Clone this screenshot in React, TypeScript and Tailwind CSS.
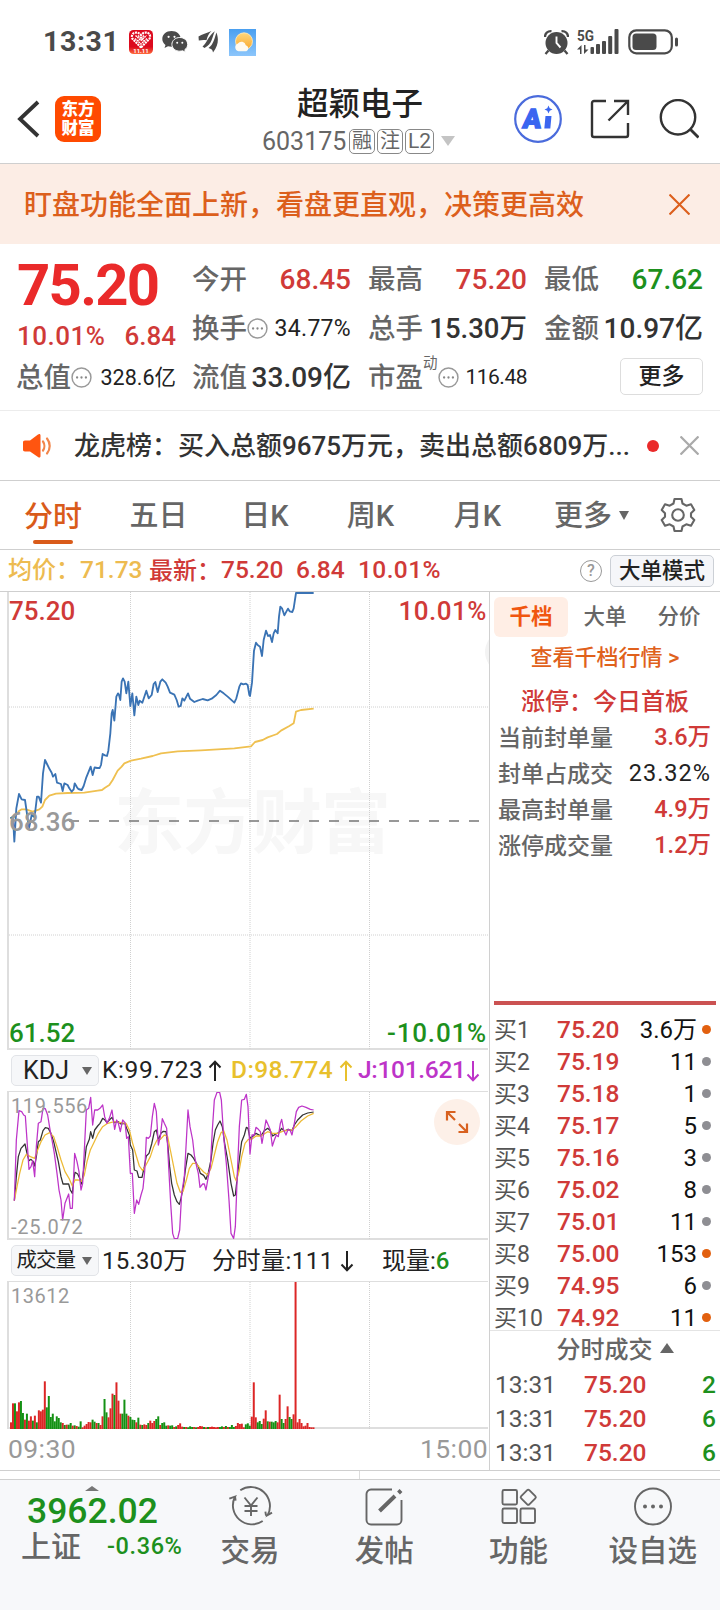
import clsx from 'clsx';
import React from 'react';

// ── Data ──────────────────────────────────────────────────────────────────────

const PRICE_LINE =
  '28,1015 36,1010 40,1085 46,985 54,942 62,958 72,960 80,1015 84,1045 92,1005 98,1010 102,1000 108,950 113,950 120,968 126,880 132,840 138,852 146,868 152,878 156,890 163,882 168,908 180,912 185,933 190,910 200,915 205,925 212,935 218,928 221,910 228,922 232,927 242,930 248,918 256,892 263,875 269,860 275,885 281,862 288,864 296,864 300,855 305,822 312,826 318,828 322,812 328,760 332,700 335,690 340,722 346,650 351,640 354,645 358,660 362,605 366,595 371,605 376,640 382,605 388,678 394,640 400,706 406,650 412,675 416,662 424,668 430,650 436,632 443,655 452,645 458,612 463,606 470,636 478,605 484,598 494,608 500,620 507,638 520,644 527,660 533,680 539,678 544,655 550,662 561,640 567,656 580,666 590,662 605,657 620,661 632,656 646,645 657,632 668,640 680,650 700,668 706,655 715,620 720,610 727,613 735,611 740,615 745,645 747,648 753,608 759,512 765,488 770,495 777,500 783,528 788,480 795,452 801,468 807,465 813,486 818,460 823,450 830,460 834,410 838,380 843,385 850,406 856,395 861,386 866,394 874,396 878,385 885,339 938,339';

const AVG_LINE =
  '28,1015 42,1010 54,993 62,988 75,988 95,995 115,988 124,980 132,960 145,947 165,941 200,939 250,938 290,932 303,930 312,923 325,915 335,900 350,872 362,860 370,850 390,842 420,836 455,828 480,820 530,814 600,811 700,805 750,799 762,786 785,780 800,772 828,762 840,752 865,738 878,730 881,715 885,695 900,690 938,686';

const J_LINE =
  '40,482 46,300 54,212 62,215 68,225 73,228 78,300 84,388 90,380 95,362 101,410 106,320 112,250 120,245 126,205 133,206 140,225 148,275 153,300 160,340 168,400 174,450 180,480 185,540 192,490 203,462 208,505 214,505 217,430 221,340 228,365 234,395 240,450 245,430 250,330 256,210 263,205 269,172 275,255 281,210 290,210 297,205 305,195 311,230 318,250 325,235 333,210 341,268 347,240 352,250 358,275 365,240 372,248 377,295 382,290 388,400 394,400 400,520 407,480 413,493 420,465 426,445 431,395 436,292 442,295 448,288 454,230 460,190 466,215 472,315 478,290 484,236 490,250 497,265 503,380 509,490 515,580 520,596 530,595 536,570 542,460 550,410 555,320 561,210 567,260 575,300 580,345 587,380 592,400 597,442 605,432 610,432 615,450 621,415 628,380 634,270 640,180 648,157 656,157 661,180 668,290 676,370 684,480 690,580 698,595 703,560 709,400 715,260 722,180 730,178 736,163 741,200 747,342 753,285 760,285 765,262 772,268 778,275 783,310 790,270 795,240 803,258 808,270 814,318 820,300 826,285 832,290 838,250 842,238 848,270 855,285 861,268 868,272 873,285 880,250 886,215 893,202 903,198 915,202 928,208 938,210';

const K_LINE =
  '40,482 46,410 52,350 60,325 72,312 78,340 84,362 90,358 97,365 101,378 106,350 112,305 118,300 126,272 133,263 142,265 150,280 158,305 165,335 172,365 180,410 186,432 203,432 208,450 214,460 218,420 222,397 230,402 236,415 242,432 248,390 256,320 265,298 269,275 275,295 281,270 290,258 297,250 305,235 312,240 318,248 325,240 333,232 340,248 352,245 360,252 372,250 378,268 385,285 388,315 395,330 400,390 408,393 413,412 423,412 430,380 436,348 444,340 452,312 460,275 466,270 472,300 480,280 487,274 495,275 500,310 506,380 512,430 520,465 528,485 535,493 540,475 547,440 553,390 561,340 570,345 578,355 585,368 592,380 598,400 608,406 615,418 622,398 630,360 636,310 643,270 650,255 657,243 664,260 671,310 680,360 690,430 698,468 703,465 709,410 716,350 722,305 730,285 736,262 741,265 747,295 754,290 765,280 780,288 790,272 800,265 808,272 815,288 824,282 834,278 842,265 850,273 862,268 873,272 880,255 890,240 905,225 920,219 938,216';

const D_LINE =
  '40,482 48,440 56,400 66,360 76,343 88,350 101,355 110,330 120,305 132,285 146,278 158,290 168,320 180,360 192,395 204,415 214,438 222,420 232,420 242,424 250,405 258,365 268,330 280,305 292,280 305,260 320,250 340,245 360,248 375,250 385,270 395,310 405,345 415,378 425,392 435,375 448,350 458,320 468,300 478,298 490,285 500,290 508,330 518,380 528,430 538,457 546,455 556,420 565,385 575,370 585,370 595,382 608,396 620,405 630,385 640,345 650,305 660,278 668,272 678,300 690,360 700,410 706,423 714,395 722,350 732,310 742,298 752,298 765,288 780,288 800,275 815,280 830,280 850,272 873,270 885,260 900,243 920,228 938,220';

// one entry per minute, height + direction (r = up, g = down)
const VOLUME =
  '20r 77r 77g 53r 80r 84g 48g 28r 46g 25r 38r 25g 40r 20g 56r 53r 58r 143r 65g 99g 36g 46g 23g 38g 33g 20g 18r 12g 13r 13g 18g 10r 11g 9r 7g 23g 5r 10r 15r 21r 20r 28g 22g 18r 18g 12r 38r 90g 50g 35r 62r 106r 102g 140r 85r 46r 46g 88g 46g 40r 36g 28g 27g 20r 34g 13r 12g 14r 12r 18g 25r 18r 24r 30g 38g 12r 18g 20g 10g 11r 10g 11g 6r 8g 12r 17r 7r 6g 6r 5g 8g 6g 6r 5g 6r 9r 8r 6g 5r 6g 6r 7r 6r 5r 6r 6g 8g 6r 9g 6r 6g 12g 6g 9r 18r 15r 16r 5r 14g 17g 10g 37r 140r 35r 20g 24g 15g 31r 56r 23g 22r 22g 20g 24g 20r 103r 30g 18g 30r 68r 36g 30g 44r 441r 20r 30r 18r 8r 10r 18r 6r 5r 5r'
    .split(' ')
    .map((v) => ({ h: parseInt(v, 10), up: v.endsWith('r') }));

const BIDS = [
  { level: '买1', price: '75.20', qty: '3.6万', hot: true },
  { level: '买2', price: '75.19', qty: '11', hot: false },
  { level: '买3', price: '75.18', qty: '1', hot: false },
  { level: '买4', price: '75.17', qty: '5', hot: false },
  { level: '买5', price: '75.16', qty: '3', hot: false },
  { level: '买6', price: '75.02', qty: '8', hot: false },
  { level: '买7', price: '75.01', qty: '11', hot: false },
  { level: '买8', price: '75.00', qty: '153', hot: true },
  { level: '买9', price: '74.95', qty: '6', hot: false },
  { level: '买10', price: '74.92', qty: '11', hot: true },
];

const TICKS = [
  { time: '13:31', price: '75.20', vol: '2' },
  { time: '13:31', price: '75.20', vol: '6' },
  { time: '13:31', price: '75.20', vol: '6' },
];

const LIMIT_STATS = [
  { label: '当前封单量', value: '3.6万', red: true },
  { label: '封单占成交', value: '23.32%', red: false },
  { label: '最高封单量', value: '4.9万', red: true },
  { label: '涨停成交量', value: '1.2万', red: true },
];

// ── Small pieces ──────────────────────────────────────────────────────────────

const MoreDot = () => (
  <svg width="21" height="21" viewBox="0 0 20 20" className="shrink-0">
    <circle cx="10" cy="10" r="9" fill="none" stroke="#999" strokeWidth="1.4" />
    <circle cx="5.8" cy="10" r="1.1" fill="#888" />
    <circle cx="10" cy="10" r="1.1" fill="#888" />
    <circle cx="14.2" cy="10" r="1.1" fill="#888" />
  </svg>
);

const Arrow = ({ down }: { down?: boolean }) => (
  <svg width="14" height="22" viewBox="0 0 14 22" className={clsx('shrink-0', down && 'rotate-180')}>
    <path d="M7 21V2M1.5 7.5 7 1.8l5.5 5.7" fill="none" stroke="currentColor" strokeWidth="2" />
  </svg>
);

const Caret = ({ up, className }: { up?: boolean; className?: string }) => (
  <svg width="14" height="10" viewBox="0 0 14 10" className={clsx('shrink-0', className)}>
    <path d={up ? 'M0 10h14L7 0z' : 'M0 0h14L7 10z'} fill="currentColor" />
  </svg>
);

const Cross = ({ size, width }: { size: number; width: number }) => (
  <svg width={size} height={size} viewBox="0 0 20 20">
    <path d="M.5.5l19 19M19.5.5l-19 19" stroke="currentColor" strokeWidth={width} />
  </svg>
);

const GridLines = ({ top, bottom }: { top: number; bottom: number }) => (
  <g stroke="#d0d0d0" strokeWidth="3" strokeDasharray="3 3">
    <path d={`M388.5 ${top}V${bottom}`} />
    <path d={`M747 ${top}V${bottom}`} />
    <path d={`M1105.5 ${top}V${bottom}`} />
  </g>
);

// ── Status bar ────────────────────────────────────────────────────────────────

const StatusBar = () => (
  <div className="flex h-[76px] items-center pt-[8px] pl-[43px] text-[#4a4a4a]">
    <span className="w-[86px] text-[28.5px] leading-none font-bold tracking-[0.6px]">13:31</span>
    <svg width="24" height="24" viewBox="0 0 24 24" className="overflow-visible">
      <defs>
        <linearGradient id="mall" x1="0" y1="0" x2="0" y2="1">
          <stop offset=".7" stopColor="#dc0a1e" />
          <stop offset="1" stopColor="#ff6a3c" />
        </linearGradient>
      </defs>
      <rect width="24" height="24" rx="4.5" fill="url(#mall)" />
      <path d="M12 17.5 4.2 9.5A4 4 0 0 1 4 3.8c2-2 5.5-1.6 8 1.2 2.5-2.8 6-3.2 8-1.2a4 4 0 0 1-.2 5.7z" fill="none" stroke="#fff" strokeWidth="2.2" strokeDasharray="2 .8" />
      <path d="M6.5 5.5l5.5 5 5.5-5M6 8.5l6 5.5 6-5.5M9 5.5 15 11M15 5.5 9 11" fill="none" stroke="#fff" strokeWidth="1.4" strokeDasharray="1.8 .6" />
      <text x="12" y="23" textAnchor="middle" fill="#fff" fontSize="6" fontWeight="700">11.11</text>
    </svg>
    <svg width="26" height="22" viewBox="0 0 26 22" className="ml-[9px]">
      <path d="M9.5 0C4.2 0 .3 3.5.3 7.9c0 2.4 1.2 4.5 3.2 6L2.5 17l3.500-1.700c1.100.3 2.300.5 3.500.5 5.300 0 9.200-3.500 9.200-7.900S14.800 0 9.500 0z" fill="#4a4a4a" />
      <circle cx="6.6" cy="5.8" r="1.1" fill="#fff" />
      <circle cx="12.5" cy="5.8" r="1.1" fill="#fff" />
      <path d="M17.8 6.5c-4.4 0-7.9 3-7.9 6.9 0 3.8 3.5 6.8 7.9 6.8 1 0 1.900-.2 2.800-.4l3 1.500-.8-2.600c1.800-1.300 2.900-3.100 2.900-5.300 0-3.900-3.500-6.900-7.900-6.900z" fill="#4a4a4a" stroke="#fff" strokeWidth="1" />
      <circle cx="15.2" cy="11.8" r="1" fill="#fff" />
      <circle cx="20.3" cy="11.8" r="1" fill="#fff" />
    </svg>
    <svg width="21" height="22" viewBox="0 0 21 22" className="ml-[10px]">
      <path d="M.5 5.5C4 3.2 8.5 2.5 13.5 0 10.5 2.8 9.5 5.5 8.5 9.2 6.5 8.8 3.5 8.8.8 9.5zM4.5 15.5C9 12 10.5 4.5 16.8.3 14 6 14.5 13 6.5 17zM10.5 17C15.5 13.500 16.500 7 18.500 1.500c1.800 5 2.800 12-3.500 20-.3-2.500-1.500-3.800-4.500-4.500z" fill="#4a4a4a" />
    </svg>
    <svg width="27" height="27" viewBox="0 0 27 27" className="ml-[10px]">
      <defs>
        <linearGradient id="sky" x1="0" y1="0" x2="0" y2="1">
          <stop offset="0" stopColor="#4a9ff0" />
          <stop offset="1" stopColor="#8cc6fb" />
        </linearGradient>
        <linearGradient id="sun" x1="0" y1="0" x2="0" y2="1">
          <stop offset="0" stopColor="#ffd77c" />
          <stop offset="1" stopColor="#f9a72c" />
        </linearGradient>
      </defs>
      <rect width="27" height="27" fill="url(#sky)" />
      <circle cx="15" cy="12.3" r="8.5" fill="url(#sun)" stroke="#ffecc0" strokeWidth=".8" />
      <path d="M9.5 22.2a4 4 0 0 1-.6-7.7 4.4 4.4 0 0 1 7.9 1.8 3.1 3.1 0 0 1 .5 5.9z" fill="#fffaf0" />
    </svg>

    <svg width="25" height="25" viewBox="0 0 25 25" className="ml-[288px]">
      <circle cx="12.5" cy="13" r="11" fill="#4a4a4a" />
      <path d="M12.5 6.5V13l4 4.5" fill="none" stroke="#fff" strokeWidth="1.9" />
      <path d="M1 7C1 3 3.5 1 7.5 1.2M24 7c0-4-2.5-6-6.5-5.8M4.5 20.5l-3 3.5M20.5 20.5l3 3.5" fill="none" stroke="#4a4a4a" strokeWidth="2.3" />
    </svg>
    <svg width="42" height="26" viewBox="0 0 42 26" className="ml-[8px] overflow-visible" fill="#4a4a4a">
      <text x="0" y="12" fontSize="15" fontWeight="700" textLength="17" lengthAdjust="spacingAndGlyphs">5G</text>
      <rect x="13.5" y="18" width="3.5" height="7" rx="1" />
      <rect x="19" y="15" width="4" height="10" rx="1" />
      <rect x="25" y="12" width="4" height="13" rx="1" />
      <rect x="31.2" y="7" width="4" height="18" rx="1" />
      <rect x="37.5" y="0" width="4" height="25" rx="1" />
      <path d="M0 20.5 4.5 16v9H3v-4.5zM7 16v9l4.5-4.5H8.5V16z" />
    </svg>
    <svg width="52" height="26" viewBox="0 0 52 26" className="ml-[9px]">
      <rect x="1.3" y="1.3" width="42.5" height="23" rx="7" fill="none" stroke="#4a4a4a" strokeWidth="2.2" />
      <rect x="4.5" y="4.5" width="24" height="16.5" rx="3.5" fill="#4a4a4a" />
      <rect x="47" y="8.5" width="3" height="9" rx="1.5" fill="#4a4a4a" />
    </svg>
  </div>
);

// ── Header ────────────────────────────────────────────────────────────────────

const Header = () => (
  <div className="flex h-[88px] items-start border-b border-[#cfcfcf]">
    <svg width="24" height="38" viewBox="0 0 24 38" className="mt-[24px] ml-[16px] shrink-0">
      <path d="M22 2 4 19l18 17" fill="none" stroke="#333" strokeWidth="3.8" />
    </svg>
    <div className="mt-[20px] ml-[15px] flex h-[46px] w-[46px] shrink-0 flex-col items-center justify-center rounded-[9px] bg-[#ff4a00] text-[16.5px] leading-[19px] font-black text-white">
      <span>东方</span>
      <span>财富</span>
    </div>
    <div className="ml-[142px] flex w-[234px] shrink-0 flex-col items-center pt-[7px]">
      <h1 className="h-[39px] text-[31.5px] leading-[43px] text-[#222]">超颖电子</h1>
      <div className="flex h-[38px] items-center self-start pl-[19px] font-normal text-[#666]">
        <span className="w-[87px] text-[25px] leading-none">603175</span>
        <span className="flex h-[25px] w-[26px] items-center justify-center rounded-[5px] border border-[#888] text-[20px] leading-none">融</span>
        <span className="ml-[2px] flex h-[25px] w-[26px] items-center justify-center rounded-[5px] border border-[#888] text-[20px] leading-none">注</span>
        <span className="ml-[2px] flex h-[25px] w-[29px] items-center justify-center rounded-[5px] border border-[#888] text-[21px] leading-none">L2</span>
        <Caret className="ml-[7px] text-[#c4c4c4]" />
      </div>
    </div>
    <svg width="48" height="48" viewBox="0 0 48 48" className="mt-[19px] ml-[37px] shrink-0">
      <circle cx="24" cy="24" r="22.8" fill="none" stroke="#4a6bdc" strokeWidth="2.2" />
      <text x="8.5" y="33" fill="#3a66f0" stroke="#3a66f0" strokeWidth="1.3" fontSize="27" fontWeight="900" transform="skewX(-6) translate(3 0)">A</text>
      <path d="M31.5 21h6l-1.2 12.5h-6z" fill="#3a66f0" />
      <path d="M34.5 10.5l1.2 2.8 2.8 1.2-2.8 1.2-1.2 2.8-1.2-2.8-2.8-1.2 2.8-1.2z" fill="#3a66f0" />
    </svg>
    <svg width="40" height="40" viewBox="0 0 40 40" className="mt-[23px] ml-[28px] shrink-0" fill="none" stroke="#333" strokeWidth="2.4">
      <path d="M16 2H4a2 2 0 0 0-2 2v32a2 2 0 0 0 2 2h32a2 2 0 0 0 2-2V24M24 2h14v14M38 2 18.5 21.5" />
    </svg>
    <svg width="40" height="40" viewBox="0 0 40 40" className="mt-[23px] ml-[29px] shrink-0" fill="none" stroke="#333" strokeWidth="2.4">
      <circle cx="19" cy="18.3" r="17.2" />
      <path d="M31 30l8.5 8.5" strokeWidth="2.8" />
    </svg>
  </div>
);

const Banner = () => (
  <div className="flex h-[80px] items-center justify-between bg-[#fcede5] pr-[30px] pl-[24px] text-[#dc5f1c]">
    <span className="pt-[3px] text-[28px] leading-none">盯盘功能全面上新，看盘更直观，决策更高效</span>
    <Cross size={21} width={2} />
  </div>
);

// ── Quote ─────────────────────────────────────────────────────────────────────

const Cell = ({ label, value, valueClass, sup, dot }: { label: string; value: string; valueClass: string; sup?: string; dot?: boolean }) => (
  <div className="flex h-[49px] items-center">
    <span className="text-[27.5px] leading-none text-[#666]">{label}</span>
    {sup && <span className="mb-[26px] text-[14.5px] leading-none font-normal text-[#666]">{sup}</span>}
    {dot && <MoreDot />}
    <span className={clsx('ml-auto leading-none whitespace-nowrap', valueClass)}>{value}</span>
  </div>
);

const Quote = () => (
  <div className="flex h-[167px] border-b border-[#ececec] pr-[16px] pl-[17px]">
    <div className="w-[159px]">
      <div className="flex h-[82px] items-center text-[58px] leading-none font-bold tracking-[-1.7px] text-[#ea2a2a]">75.20</div>
      <div className="flex h-[20px] items-center justify-between text-[26px] leading-none whitespace-nowrap text-[#d03a38]">
        <span className="tracking-[0.5px]">10.01%</span>
        <span>6.84</span>
      </div>
      <div className="-ml-[1px] pt-[7px]">
        <Cell label="总值" value="328.6亿" valueClass="text-[21.5px] font-normal text-[#222]" dot />
      </div>
    </div>
    <div className="ml-[16px] w-[159px] pt-[11px]">
      <Cell label="今开" value="68.45" valueClass="text-[28px] text-[#d03a38]" />
      <Cell label="换手" value="34.77%" valueClass="text-[23px] font-normal tracking-[0.3px] text-[#222]" dot />
      <Cell label="流值" value="33.09亿" valueClass="text-[28px] text-[#333]" />
    </div>
    <div className="ml-[17px] w-[159px] pt-[11px]">
      <Cell label="最高" value="75.20" valueClass="text-[28px] text-[#d03a38]" />
      <Cell label="总手" value="15.30万" valueClass="text-[27.5px] text-[#333]" />
      <Cell label="市盈" value="116.48" valueClass="text-[21px] font-normal tracking-[-0.5px] text-[#222]" sup="动" dot />
    </div>
    <div className="ml-[17px] w-[159px] pt-[11px]">
      <Cell label="最低" value="67.62" valueClass="text-[28px] text-[#1d901d]" />
      <Cell label="金额" value="10.97亿" valueClass="text-[28px] text-[#333]" />
      <div className="flex h-[47px] items-center justify-end">
        <button className="h-[37px] w-[83px] rounded-[5px] border border-[#ddd] text-[23px] leading-none text-[#222]">更多</button>
      </div>
    </div>
  </div>
);

const News = () => (
  <div className="flex h-[70px] items-center border-b border-[#cfcfcf] pl-[22px]">
    <svg width="30" height="26" viewBox="0 0 30 26">
      <path d="M3 7.5h5L16 1.5c1.5-1 2.5-.5 2.5 1v20.5c0 1.5-1 2-2.5 1L8 18.5H3c-1.5 0-2-.8-2-2v-7c0-1.2.5-2 2-2z" fill="#ff5510" />
      <path d="M21 8.5c1.8 2.5 1.8 6.5 0 9M25 5.5c3.6 4.5 3.6 10.5 0 15" fill="none" stroke="#f2854a" strokeWidth="2.2" strokeLinecap="round" />
    </svg>
    <span className="ml-[22px] w-[558px] text-[26px] leading-none whitespace-nowrap text-[#333]">龙虎榜：买入总额9675万元，卖出总额6809万...</span>
    <span className="ml-[15px] h-[12px] w-[12px] rounded-full bg-[#ea2a2a]" />
    <span className="ml-[21px] text-[#aaa]">
      <Cross size={19} width={2.4} />
    </span>
  </div>
);

// ── Period tabs ───────────────────────────────────────────────────────────────

const Tabs = () => (
  <div className="flex h-[69px] items-center border-b border-[#cfcfcf] text-[29px] leading-none text-[#666]">
    <div className="flex h-full w-[106px] flex-col items-center pt-[22px] text-[#d95b1a]">
      <span>分时</span>
      <span className="mt-[8px] h-[4px] w-[40px] rounded-full bg-[#d95b1a]" />
    </div>
    <span className="w-[105px] pt-[2px] text-center">五日</span>
    <span className="w-[108px] pt-[2px] text-center">日K</span>
    <span className="w-[103px] pt-[2px] text-center">周K</span>
    <span className="w-[111px] pt-[2px] text-center">月K</span>
    <span className="ml-[21px] pt-[2px]">更多</span>
    <svg width="10" height="9" viewBox="0 0 10 9" className="ml-[7px]">
      <path d="M0 0h10L5 9z" fill="#666" />
    </svg>
    <svg width="36" height="36" viewBox="0 0 36 36" className="ml-[31px]" fill="none" stroke="#666" strokeWidth="2.1">
      <path d="M14.5 2h7l1 4.5 3.8 2.2L31 7.3l3.3 5.7-3.3 3.2v3.6l3.3 3.2-3.3 5.7-4.7-1.4-3.8 2.2-1 4.5h-7l-1-4.5-3.8-2.2L5 28.700 1.700 23 5 19.800v-3.600L1.700 13 5 7.300l4.700 1.400 3.800-2.200z" strokeLinejoin="round" />
      <circle cx="18" cy="18" r="5.8" />
    </svg>
  </div>
);

const InfoRow = () => (
  <div className="flex h-[42px] items-center border-b border-[#cfcfcf] pl-[8px] text-[24px] leading-none">
    <span className="w-[141px] whitespace-nowrap text-[#edbb50]">均价：<span className="text-[24.5px]">71.73</span></span>
    <span className="w-[72px] text-[#d03a38]">最新：</span>
    <span className="w-[75px] text-[24.5px] text-[#d03a38]">75.20</span>
    <span className="w-[62px] text-[24.5px] text-[#d03a38]">6.84</span>
    <span className="w-[90px] text-[24.5px] tracking-[0.4px] text-[#d03a38]">10.01%</span>
    <span className="ml-auto flex h-[22px] w-[22px] items-center justify-center rounded-full border-[1.5px] border-[#999] text-[16px] text-[#999]">?</span>
    <button className="mr-[6px] ml-[8px] h-[32px] w-[104px] rounded-[5px] border border-[#ccd0d6] bg-[#f5f6f9] text-[21.5px] leading-none text-[#222]">大单模式</button>
  </div>
);

// ── Charts ────────────────────────────────────────────────────────────────────

const PriceChart = () => (
  <div className="relative ml-[7px] h-[458px] w-[481px] border-b-2 border-l-2 border-[#dedede] text-[26px] leading-none">
    <svg width="480" height="457" viewBox="24 336 1440 1371" className="block">
      <text x="755" y="1105" textAnchor="middle" textLength="830" fill="#f7f7f7" fontSize="210" fontWeight="700">东方财富</text>
      <path d="M1464 478q-24 38 0 76" fill="#f3f3f3" />
      <GridLines top={336} bottom={1707} />
      <path d="M24 681H1464M24 1365H1464" stroke="#d0d0d0" strokeWidth="3" strokeDasharray="3 3" />
      <path d="M204 1023H1440" stroke="#777" strokeWidth="4.5" strokeDasharray="30 30" />
      <polyline points={AVG_LINE} fill="none" stroke="#efc050" strokeWidth="5.5" strokeLinejoin="round" />
      <polyline points={PRICE_LINE} fill="none" stroke="#3a73b4" strokeWidth="5.5" strokeLinejoin="round" />
    </svg>
    <span className="absolute top-[6px] left-0 text-[#d03a38]">75.20</span>
    <span className="absolute top-[6px] right-[1px] tracking-[0.5px] text-[#d03a38]">10.01%</span>
    <span className="absolute top-[217px] left-0 text-[#999]">68.36</span>
    <span className="absolute bottom-[2px] left-0 text-[#1d901d]">61.52</span>
    <span className="absolute right-[1px] bottom-[2px] tracking-[0.8px] text-[#1d901d]">-10.01%</span>
  </div>
);

const IndicatorButton = ({ children }: { children: React.ReactNode }) => (
  <button className="flex h-[31px] w-[88px] shrink-0 items-center justify-end rounded-[5px] border border-[#e2e4e8] bg-[#f6f7f9] pr-[6px] leading-none text-[#222]">
    {children}
    <svg width="10" height="8" viewBox="0 0 10 8">
      <path d="M0 0h10L5 8z" fill="#666" />
    </svg>
  </button>
);

const KdjChart = () => (
  <>
    <div className="flex h-[41px] items-center pl-[11px] text-[24.5px] leading-none">
      <IndicatorButton>
        <span className="mr-[13px] text-[25px] font-normal">KDJ</span>
      </IndicatorButton>
      <span className="flex w-[123px] items-center justify-between pl-[3px] font-normal tracking-[0.6px] text-[#222]">K:99.723<Arrow /></span>
      <span className="ml-[9px] flex w-[122px] items-center justify-between tracking-[0.4px] text-[#e8c02c]">D:98.774<Arrow /></span>
      <span className="ml-[5px] flex w-[120px] items-center justify-between tracking-[-0.3px] text-[#bd34c8]">J:101.621<Arrow down /></span>
    </div>
    <div className="relative ml-[7px] h-[149px] w-[481px] border-t border-b-2 border-l-2 border-[#dedede] text-[20px] leading-none font-normal text-[#999]">
      <svg width="480" height="147" viewBox="24 156 1440 441" className="block">
        <GridLines top={156} bottom={597} />
        <g fill="none" strokeWidth="3.8" strokeLinejoin="round">
          <polyline points={K_LINE} stroke="#333" />
          <polyline points={D_LINE} stroke="#edba35" />
          <polyline points={J_LINE} stroke="#bd34c8" />
        </g>
      </svg>
      <span className="absolute top-[4px] left-[2px] tracking-[0.6px]">119.556</span>
      <span className="absolute bottom-[1px] left-[2px] tracking-[0.8px]">-25.072</span>
      <span className="absolute top-[7px] right-[8px] flex h-[46px] w-[46px] items-center justify-center rounded-full bg-[#fdf0e8]">
        <svg width="24" height="24" viewBox="0 0 24 24" fill="none" stroke="#d8611f" strokeWidth="2.2">
          <path d="M10.5 2H2v8.5M2 2l8 8M22 13.5V22h-8.5M22 22l-8-8" />
        </svg>
      </span>
    </div>
  </>
);

const VolumeChart = () => (
  <>
    <div className="flex h-[41px] items-center pl-[11px] text-[24px] leading-none font-normal text-[#222]">
      <IndicatorButton>
        <span className="mr-[7px] text-[20.5px] tracking-[-1px]">成交量</span>
      </IndicatorButton>
      <span className="w-[113px] pl-[3px] tracking-[0.2px]">15.30万</span>
      <span className="flex w-[142px] items-center justify-between tracking-[0.5px]">分时量:111<Arrow down /></span>
      <span className="ml-[28px]">现量:<span className="font-medium text-[#1d901d]">6</span></span>
    </div>
    <div className="relative ml-[7px] h-[148px] w-[481px] border-t border-b-2 border-l-2 border-[#dedede] text-[20px] leading-none font-normal text-[#999]">
      <svg width="480" height="147" viewBox="24 126 1440 441" className="block">
        <GridLines top={126} bottom={567} />
        {VOLUME.map((v, i) => (
          <rect key={i} x={27 + i * 5.97} y={567 - v.h} width="5.97" height={v.h} fill={v.up ? '#dc2626' : '#149114'} />
        ))}
      </svg>
      <span className="absolute top-[4px] left-[2px] tracking-[0.5px]">13612</span>
    </div>
    <div className="flex h-[41px] items-center justify-between pr-[1px] pl-[8px] text-[26.5px] leading-none font-normal tracking-[0.4px] text-[#999]">
      <span>09:30</span>
      <span>15:00</span>
    </div>
  </>
);

// ── Order book ────────────────────────────────────────────────────────────────

const OrderBook = () => (
  <div className="flex h-[879px] w-[231px] flex-col border-l border-[#d0d0d0]">
    <div className="flex h-[48px] items-center pt-[1px] pl-[4px] text-[21.5px] leading-none text-[#666]">
      <span className="flex h-[40px] w-[74px] items-center justify-center rounded-[6px] bg-[#ffeee5] font-bold text-[#f0560f]">千档</span>
      <span className="w-[74px] text-center">大单</span>
      <span className="w-[74px] text-center">分价</span>
    </div>
    <div className="flex h-[35px] items-center justify-center text-[22px] leading-none whitespace-pre text-[#e0611c]">查看千档行情 &gt;</div>
    <div className="flex h-[53px] items-center justify-center text-[24px] leading-none text-[#d03a38]">涨停：今日首板</div>
    {LIMIT_STATS.map((s) => (
      <div key={s.label} className="-mt-[8px] mb-[8px] flex h-[36px] shrink-0 items-center justify-between pr-[9px] pl-[8px] text-[23px] leading-none text-[#666]">
        <span>{s.label}</span>
        <span className={clsx('text-[23.5px]', s.red ? 'text-[#d03a38]' : 'font-normal tracking-[1px] text-[#222]')}>{s.value}</span>
      </div>
    ))}
    <div className="mt-[129px] mr-[4px] ml-[4px] h-[4px] shrink-0 bg-[#cb5252]" />
    <div className="mt-[9px] h-[316px] shrink-0">
      {BIDS.map((b) => (
        <div key={b.level} className="flex h-[32px] items-center pl-[4px] text-[23px] leading-none">
          <span className="w-[63px] font-normal text-[#555]">{b.level}</span>
          <span className="text-[24.5px] text-[#d03a38]">{b.price}</span>
          <span className="ml-auto text-[24px] font-normal text-[#111]">{b.qty}</span>
          <span className={clsx('mr-[9px] mb-[2px] ml-[5px] h-[9px] w-[9px] rounded-full', b.hot ? 'bg-[#e2600f]' : 'bg-[#8e8e93]')} />
        </div>
      ))}
    </div>
    <div className="flex h-[38px] shrink-0 items-center justify-center border-t border-[#e4e4e4] pl-[20px] text-[24px] leading-none text-[#666]">
      分时成交
      <Caret up className="mb-[4px] ml-[7px]" />
    </div>
    {TICKS.map((t, i) => (
      <div key={i} className="flex h-[34px] shrink-0 items-center pr-[4px] pl-[5px] text-[24.5px] leading-none text-[#555]">
        <span className="w-[89px] font-normal">{t.time}</span>
        <span className="text-[#d03a38]">{t.price}</span>
        <span className="ml-auto text-[#1d901d]">{t.vol}</span>
      </div>
    ))}
  </div>
);

// ── Bottom nav ────────────────────────────────────────────────────────────────

const NavItem = ({ label, children }: { label: string; children: React.ReactNode }) => (
  <div className="flex w-[134.4px] flex-col items-center pt-[7px] text-[29.5px] leading-none text-[#666]">
    <svg width="44" height="40" viewBox="0 0 44 40" className="overflow-visible" fill="none" stroke="#666" strokeWidth="1.9">
      {children}
    </svg>
    <span className="mt-[10px]">{label}</span>
  </div>
);

const BottomNav = () => (
  <div className="flex h-[131px] border-t border-[#d0d0d0] bg-[#f7f8fa]">
    <div className="w-[183px] pl-[21px]">
      <svg width="14" height="5" viewBox="0 0 14 5" className="mt-[6px] ml-[64px]">
        <path d="M0 5h14L7 0z" fill="#777" />
      </svg>
      <div className="flex h-[42px] items-center pl-[6px] text-[35.5px] leading-none text-[#1d901d]">3962.02</div>
      <div className="flex h-[27px] items-center leading-none">
        <span className="w-[86px] text-[30px] text-[#666]">上证</span>
        <span className="text-[23.5px] tracking-[0.6px] whitespace-nowrap text-[#1d901d]">-0.36%</span>
      </div>
    </div>
    <NavItem label="交易">
      <path d="M12.3 3.3A19 19 0 0 1 39.7 28l4.3-2.4M38 28.6l-.6-4M34.700 34A19 19 0 0 1 7 9.700l-5.700 2M7 9.200l.6 4.500" />
      <path d="M16.5 10.5 23 18.5l6.5-8M23 18.5V29M16.5 19h13M16.5 24h13" />
    </NavItem>
    <NavItem label="发帖">
      <path d="M30 2.5H9A4.5 4.5 0 0 0 4.5 7v26A4.5 4.5 0 0 0 9 37.5h26a4.5 4.5 0 0 0 4.5-4.5V13" />
      <path d="M17.5 24 33 9M36.5 6l2.5-2.5" strokeWidth="4" />
    </NavItem>
    <NavItem label="功能">
      <rect x="5.5" y="3" width="14.5" height="14.5" rx="1.5" />
      <rect x="5.5" y="21.5" width="14.5" height="14.5" rx="1.5" />
      <rect x="23.5" y="21.5" width="14.5" height="14.5" rx="1.5" />
      <rect x="25.5" y="4.5" width="11.5" height="11.5" rx="1.5" transform="rotate(45 31.25 10.25)" />
    </NavItem>
    <NavItem label="设自选">
      <circle cx="22" cy="19.5" r="18" />
      <g fill="#666" stroke="none">
        <circle cx="14" cy="19.5" r="2" />
        <circle cx="22" cy="19.5" r="2" />
        <circle cx="30" cy="19.5" r="2" />
      </g>
    </NavItem>
  </div>
);

export default function App() {
  return (
    <div className="h-[1610px] w-[720px] overflow-hidden bg-white font-['Roboto','Noto_Sans_CJK_SC',sans-serif] font-medium">
      <StatusBar />
      <Header />
      <Banner />
      <Quote />
      <News />
      <Tabs />
      <InfoRow />
      <div className="flex h-[879px] border-b border-[#cfcfcf]">
        <div className="w-[489px]">
          <PriceChart />
          <KdjChart />
          <VolumeChart />
        </div>
        <OrderBook />
      </div>
      <div className="flex h-[8px]">
        <div className="w-[360px] border-r border-[#ddd]" />
      </div>
      <BottomNav />
    </div>
  );
}
